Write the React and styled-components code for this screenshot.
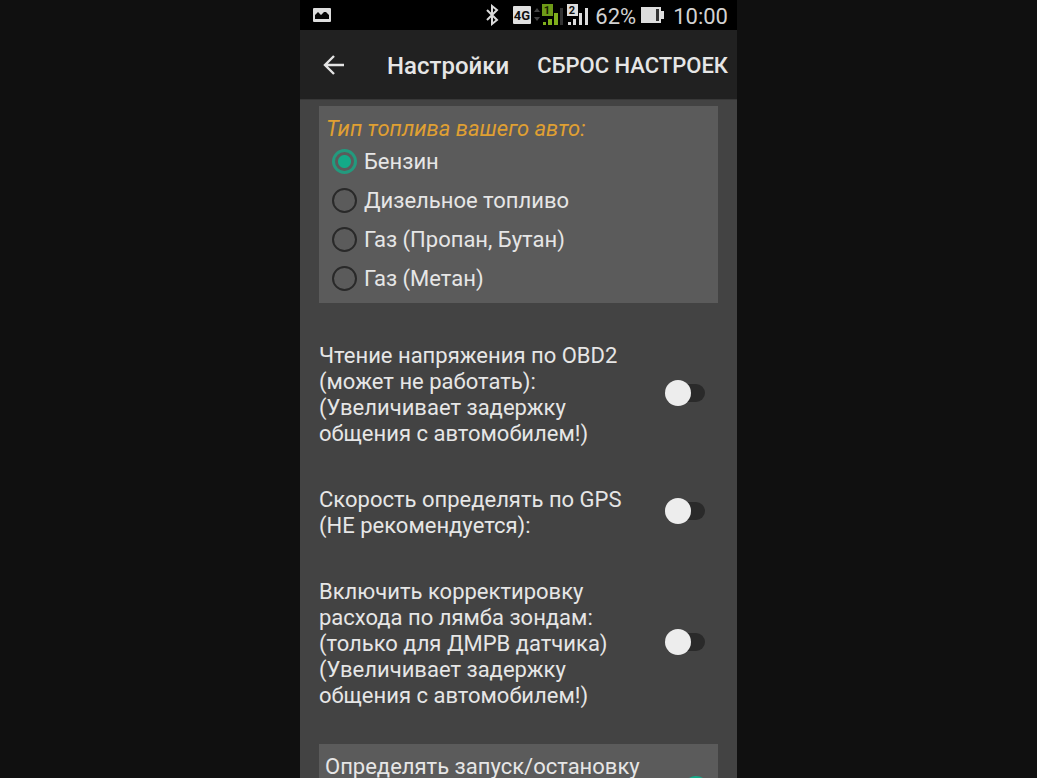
import { useState } from "react";
import styled, { createGlobalStyle } from "styled-components";

const GlobalStyle = createGlobalStyle`
  * {
    box-sizing: border-box;
  }
  body {
    margin: 0;
    background-color: #101010;
    font-family: Roboto, "Liberation Sans", sans-serif;
    color: #e6e6e6;
  }
`;

const Screen = styled.div`
  width: 100%;
  max-width: 437px;
  height: 100vh;
  margin: 0 auto;
  display: flex;
  flex-direction: column;
  overflow: hidden;
  background-color: #434343;
`;

const StatusBar = styled.div`
  flex: none;
  height: 30px;
  padding: 0 9px 0 12px;
  display: flex;
  align-items: center;
  justify-content: space-between;
  background-color: #000;
`;

const StatusGroup = styled.div`
  display: flex;
  align-items: center;
`;

const Signals = styled.div`
  display: flex;
  margin-left: 11px;
`;

const Percent = styled.span`
  margin: 3px 4px 0 5px;
  font-size: 22px;
  line-height: 28px;
  color: #d2d2d2;
`;

const Clock = styled.time`
  margin: 3px 0 0 9px;
  font-size: 22px;
  line-height: 28px;
  color: #d2d2d2;
`;

const Header = styled.header`
  flex: none;
  height: 69px;
  padding: 0 9px 0 20px;
  display: flex;
  align-items: center;
  background-color: #212121;
`;

const BackButton = styled.button`
  width: 28px;
  height: 40px;
  padding: 0;
  border: none;
  background: none;
  color: inherit;
  display: flex;
  align-items: center;
  justify-content: center;
`;

const Title = styled.h1`
  flex: 1;
  margin: 2px 0 0 39px;
  font-size: 24px;
  line-height: 32px;
  font-weight: 500;
`;

const ResetButton = styled.button`
  margin-top: 2px;
  padding: 0;
  border: none;
  background: none;
  color: inherit;
  font-family: inherit;
  font-size: 22px;
  line-height: 32px;
  font-weight: 500;
  white-space: nowrap;
`;

const Content = styled.main`
  flex: 1;
  min-height: 0;
  overflow: hidden;
  padding: 6px 19px 0;
  border-top: 1px solid #383838;
`;

const FuelCard = styled.fieldset`
  margin: 0;
  min-width: 0;
  padding: 10px 7px 5px;
  border: none;
  background-color: #5b5b5b;
`;

const FuelTitle = styled.legend`
  float: left;
  width: 100%;
  padding: 0;
  font-size: 22px;
  line-height: 26px;
  font-style: italic;
  color: #e0a032;
`;

const RadioRow = styled.label`
  clear: both;
  height: 39px;
  padding-left: 6px;
  display: flex;
  align-items: center;
  gap: 7px;
  font-size: 22px;
  line-height: 26px;
`;

const Radio = styled.input`
  appearance: none;
  flex: none;
  width: 25px;
  height: 25px;
  margin: 0;
  border: 2px solid #292929;
  border-radius: 50%;

  &:checked {
    border: 3px solid #239a7e;
    background: radial-gradient(circle, #14aa88 6px, transparent 7px);
  }
`;

const SwitchRow = styled.label`
  margin-top: 40px;
  padding-right: 13px;
  display: flex;
  align-items: center;
  justify-content: space-between;
  font-size: 22px;
  line-height: 26px;
`;

const SwitchText = styled.span`
  white-space: pre-line;
`;

const Switch = styled.input`
  appearance: none;
  flex: none;
  width: 36px;
  height: 18px;
  margin: 0 0 5px;
  display: flex;
  align-items: center;
  background-color: #2a2a2a;
  border-radius: 9px;

  &::before {
    content: "";
    flex: none;
    width: 26px;
    height: 26px;
    margin: 0 -4px;
    border-radius: 50%;
    background-color: #ededed;
  }

  &:checked {
    justify-content: flex-end;
    background-color: #2b6e5f;
  }

  &:checked::before {
    background-color: #14aa88;
  }
`;

const EngineCard = styled.label`
  height: 92px;
  margin-top: 35px;
  padding: 10px 13px 10px 6px;
  display: flex;
  align-items: flex-start;
  justify-content: space-between;
  background-color: #5b5b5b;
  font-size: 22px;
  line-height: 26px;
`;

const EngineSwitch = styled(Switch)`
  margin-top: 26px;
`;

const ImageIcon = () => (
  <svg width="19" height="16" viewBox="0 0 19 16">
    <rect x="1" y="1" width="18" height="14" rx="1" fill="#ddd" />
    <path d="M3 12V8l3-3 3 3 3-3h2l3 3v4z" fill="#050505" />
  </svg>
);

const BluetoothIcon = () => (
  <svg width="14" height="22" viewBox="0 0 14 22" fill="none" stroke="#dadada" strokeWidth="2">
    <path d="M2 6l10 10-5 4V2l5 4-10 10" />
  </svg>
);

// network badge, data arrows and the two SIM signal meters
const SignalIcon = () => (
  <svg width="80" height="24" viewBox="0 0 80 24" fontFamily="Roboto, sans-serif" fontWeight="700">
    <rect x="3" y="3" width="18" height="18" rx="1" fill="#e0e0e0" />
    <text x="12" y="17" fontSize="13" textAnchor="middle" fill="#111">4G</text>
    <path d="M24 9l3-4 3 4zM24 14l3 4 3-4z" fill="#444" />
    <rect x="32" y="1" width="11" height="12" fill="#6e9a18" />
    <text x="37" y="11" fontSize="11" textAnchor="middle" fill="#182000">1</text>
    <path d="M33 19h3v3h-3zM38 16h4v6h-4zM44 10h4v12h-4z" fill="#7fae1c" />
    <path d="M50 5h3v17h-3z" fill="#333" />
    <rect x="57" y="1" width="11" height="12" fill="#ddd" />
    <text x="62" y="11" fontSize="11" textAnchor="middle" fill="#111">2</text>
    <path d="M58 19h3v3h-3zM63 16h3v6h-3zM69 10h3v12h-3zM75 5h3v17h-3z" fill="#ddd" />
  </svg>
);

const BatteryIcon = () => (
  <svg width="24" height="18" viewBox="0 0 24 18">
    <path d="M1 1h20v4h3v8h-3v4H1z" fill="#ddd" />
    <path d="M16 3h3v12h-3z" fill="#333" />
  </svg>
);

const BackIcon = () => (
  <svg width="22" height="22" viewBox="0 0 22 22" fill="none" stroke="#e4e4e4" strokeWidth="2.4">
    <path d="M21 11H3M11 2l-9 9 9 9" />
  </svg>
);

const fuels = ["Бензин", "Дизельное топливо", "Газ (Пропан, Бутан)", "Газ (Метан)"];

const options = [
  "Чтение напряжения по OBD2\n(может не работать):\n(Увеличивает задержку\nобщения с автомобилем!)",
  "Скорость определять по GPS\n(НЕ рекомендуется):",
  "Включить корректировку\nрасхода по лямба зондам:\n(только для ДМРВ датчика)\n(Увеличивает задержку\nобщения с автомобилем!)",
];

const App = () => {
  const [fuel, setFuel] = useState(fuels[0]);

  return (
    <>
      <GlobalStyle />
      <Screen>
        <StatusBar>
          <ImageIcon />
          <StatusGroup>
            <BluetoothIcon />
            <Signals>
              <SignalIcon />
            </Signals>
            <Percent>62%</Percent>
            <BatteryIcon />
            <Clock>10:00</Clock>
          </StatusGroup>
        </StatusBar>
        <Header>
          <BackButton type="button" aria-label="Назад">
            <BackIcon />
          </BackButton>
          <Title>Настройки</Title>
          <ResetButton type="button">СБРОС НАСТРОЕК</ResetButton>
        </Header>
        <Content>
          <FuelCard>
            <FuelTitle>Тип топлива вашего авто:</FuelTitle>
            {fuels.map((name) => (
              <RadioRow key={name}>
                <Radio
                  type="radio"
                  name="fuel"
                  value={name}
                  checked={fuel === name}
                  onChange={() => setFuel(name)}
                />
                {name}
              </RadioRow>
            ))}
          </FuelCard>
          {options.map((text) => (
            <SwitchRow key={text}>
              <SwitchText>{text}</SwitchText>
              <Switch type="checkbox" role="switch" />
            </SwitchRow>
          ))}
          <EngineCard>
            <SwitchText>Определять запуск/остановку</SwitchText>
            <EngineSwitch type="checkbox" role="switch" defaultChecked />
          </EngineCard>
        </Content>
      </Screen>
    </>
  );
};

export default App;
